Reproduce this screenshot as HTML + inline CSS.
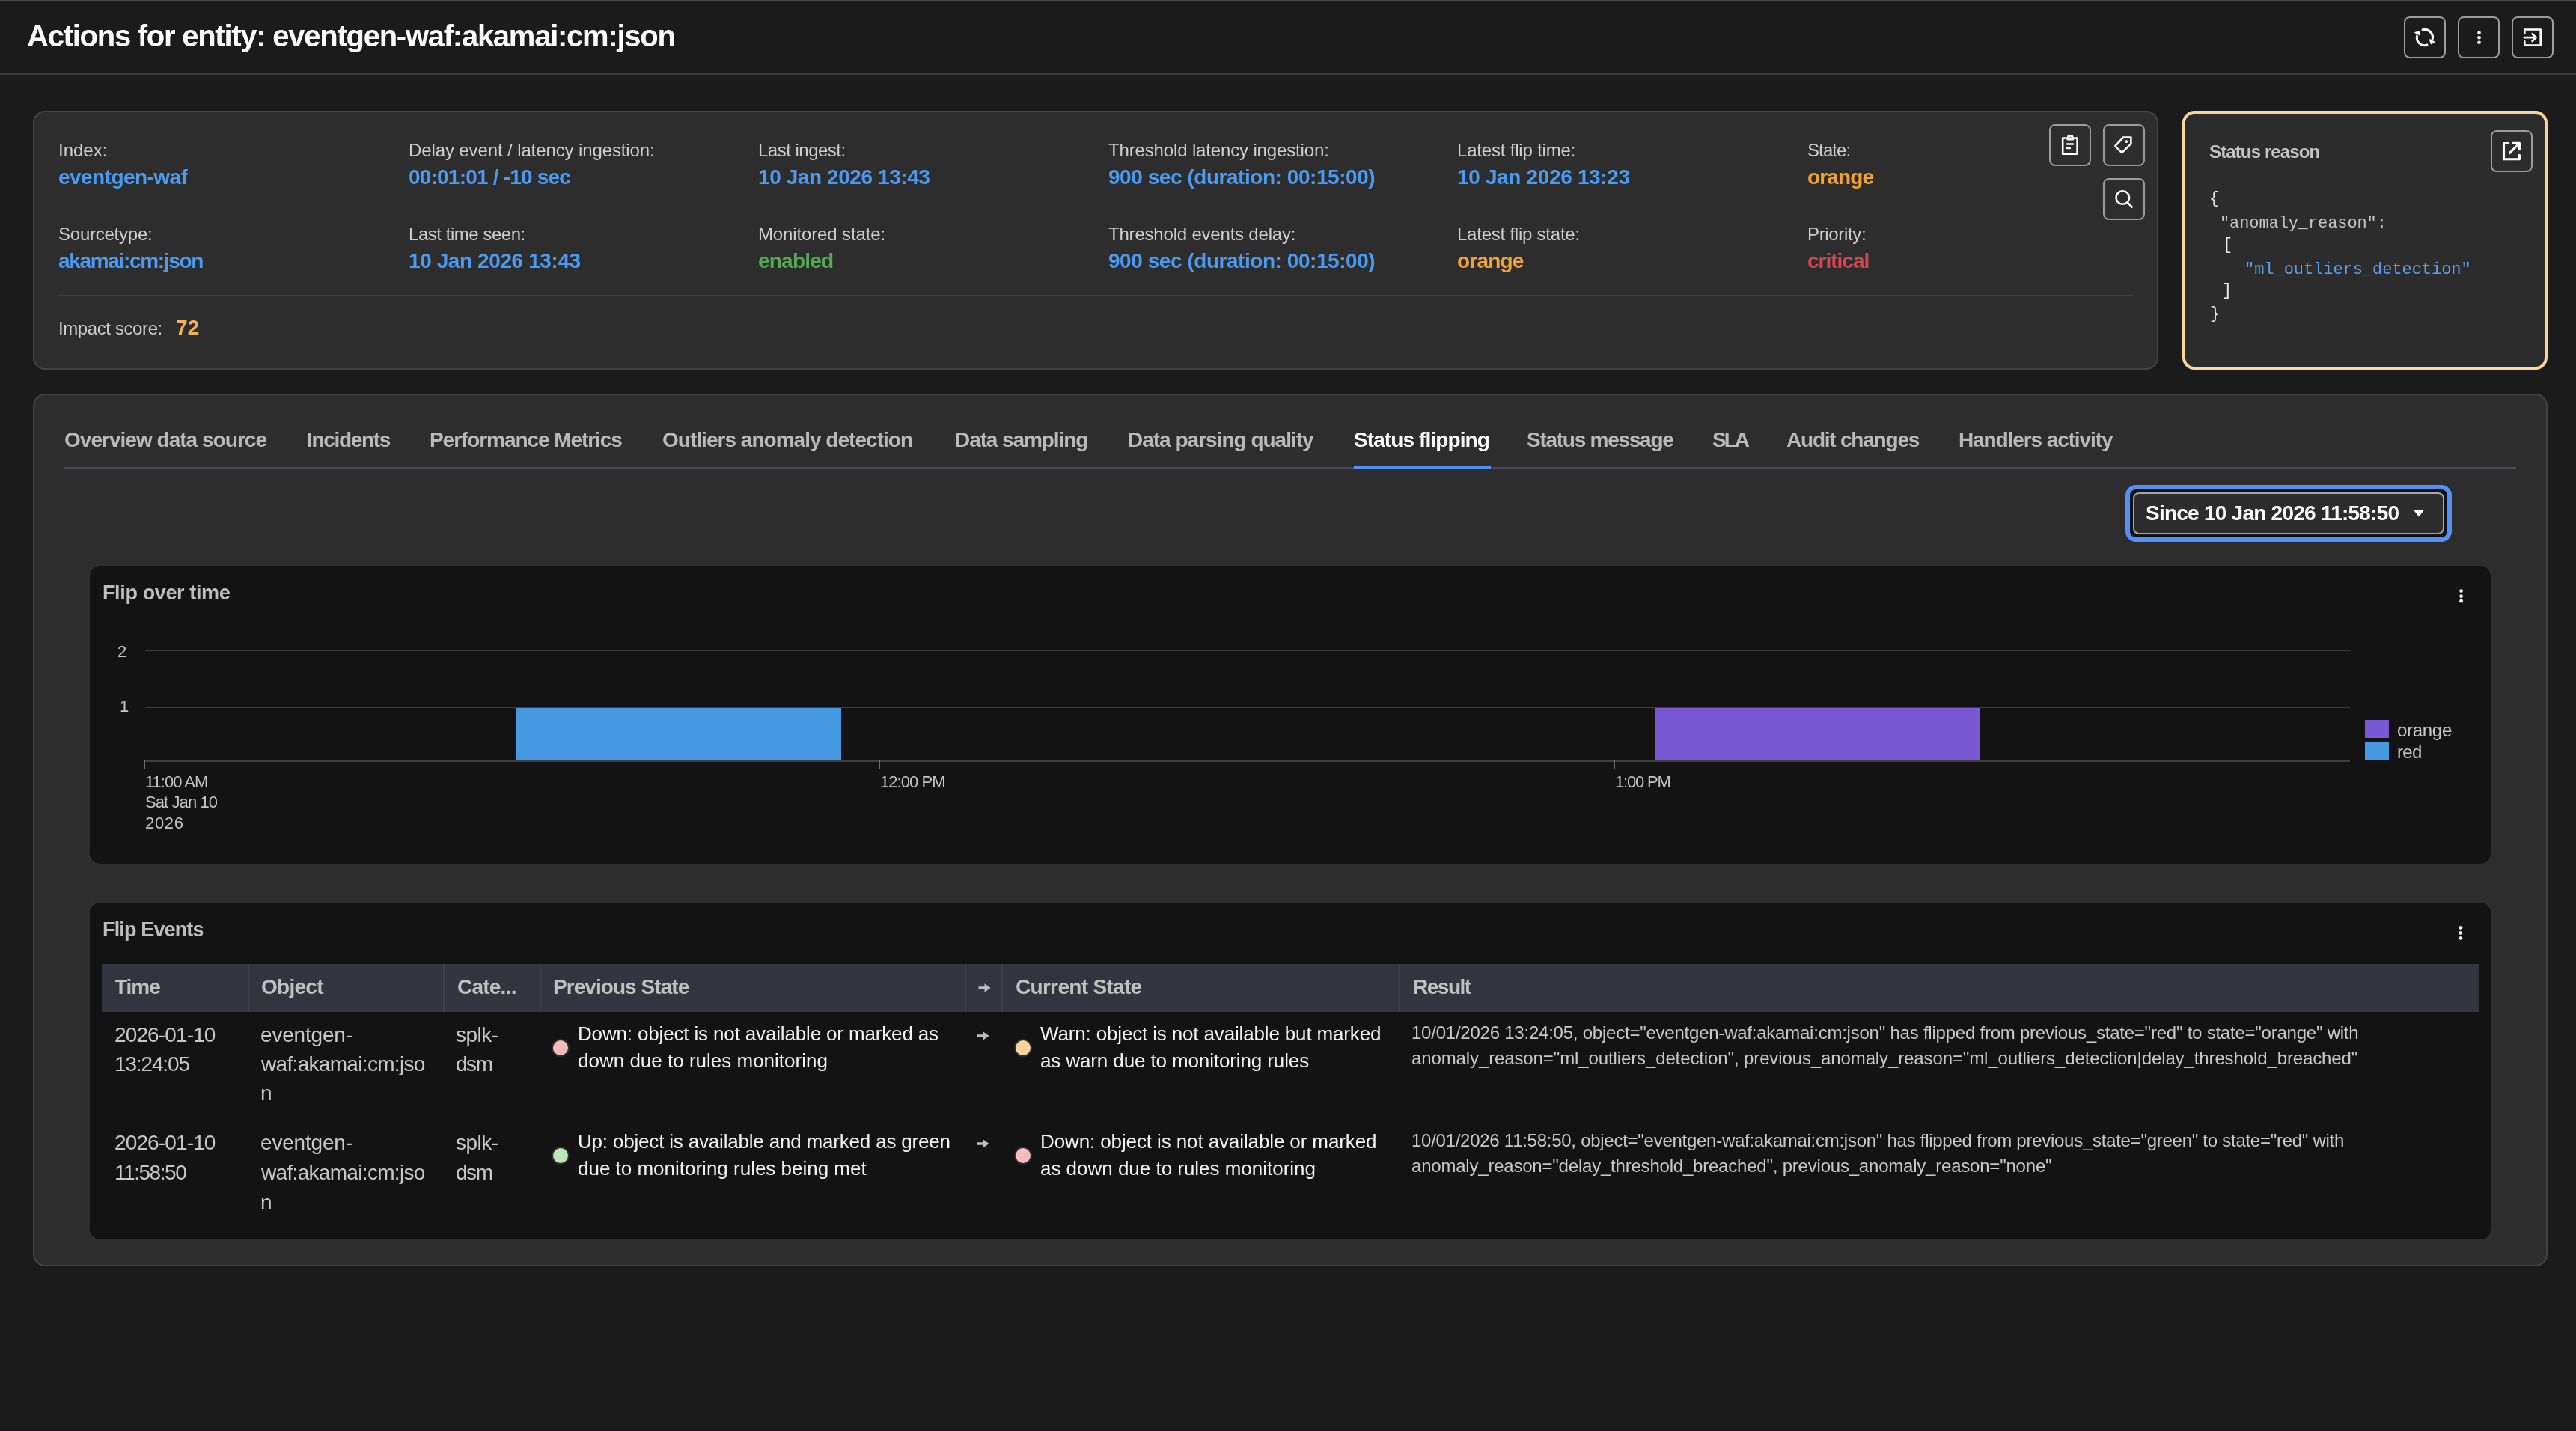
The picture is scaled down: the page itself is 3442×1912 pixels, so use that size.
<!DOCTYPE html>
<html><head><meta charset="utf-8"><title>Actions for entity</title>
<style>
html,body{margin:0;padding:0;width:3442px;height:1912px;overflow:hidden;background:#1b1b1b;}
body{position:relative;font-family:"Liberation Sans",sans-serif;}
.t{position:absolute;white-space:pre;will-change:transform;}
.b{position:absolute;}
</style></head><body>
<div class="b" style="left:0px;top:0px;width:3442px;height:2px;background:#464847"></div>
<div class="t" style="left:35.50px;top:28.20px;font-size:40px;line-height:40px;color:#ffffff;font-weight:700;letter-spacing:-1.254px;font-family:'Liberation Sans',sans-serif">Actions for entity: eventgen-waf:akamai:cm:json</div>
<div class="b" style="left:0px;top:98px;width:3442px;height:2px;background:#3a3a3a"></div>
<div class="b" style="left:3212px;top:22px;width:56px;height:56px;box-sizing:border-box;border:2px solid #9c9c9c;border-radius:8px;background:#1b1b1b"></div>
<div class="b" style="left:3284px;top:22px;width:56px;height:56px;box-sizing:border-box;border:2px solid #9c9c9c;border-radius:8px;background:#1b1b1b"></div>
<div class="b" style="left:3356px;top:22px;width:56px;height:56px;box-sizing:border-box;border:2px solid #9c9c9c;border-radius:8px;background:#1b1b1b"></div>
<svg class="b" style="left:3212px;top:22px" width="56" height="56" viewBox="0 0 56 56">
<path d="M23.9 18.3 A10.5 10.5 0 0 1 37.6 32" style="stroke:#ffffff;fill:none;stroke-width:2.6;stroke-linecap:round;stroke-linejoin:round;stroke-width:3;stroke-linecap:butt"/>
<path d="M32.1 37.7 A10.5 10.5 0 0 1 17.7 25.2" style="stroke:#ffffff;fill:none;stroke-width:2.6;stroke-linecap:round;stroke-linejoin:round;stroke-width:3;stroke-linecap:butt"/>
<path d="M34.4 30.9 L41.1 34.3 L36.3 36.6 Z" style="fill:#fff;stroke:#fff;stroke-width:1.2;stroke-linejoin:round"/>
<path d="M14.8 21.5 L20.9 19.6 L21.4 25 Z" style="fill:#fff;stroke:#fff;stroke-width:1.2;stroke-linejoin:round"/>
</svg>
<svg class="b" style="left:3284px;top:22px" width="56" height="56" viewBox="0 0 56 56">
<circle cx="28.5" cy="21.8" r="2.3" fill="#fff"/><circle cx="28.5" cy="28.3" r="2.3" fill="#fff"/><circle cx="28.5" cy="34.8" r="2.3" fill="#fff"/>
</svg>
<svg class="b" style="left:3356px;top:22px" width="56" height="56" viewBox="0 0 56 56">
<path d="M17.3 22.8 V17.5 H38.7 V38.5 H17.3 V33.4" style="stroke:#ffffff;fill:none;stroke-width:2.6;stroke-linecap:round;stroke-linejoin:round"/>
<path d="M16.8 28.1 H32.6 M27.6 23.2 L32.6 28.1 L27.6 33" style="stroke:#ffffff;fill:none;stroke-width:2.6;stroke-linecap:round;stroke-linejoin:round"/>
</svg>
<div class="b" style="left:44px;top:148px;width:2840px;height:346px;box-sizing:border-box;border:2px solid #434343;border-radius:16px;background:#2d2d2d"></div>
<div class="t" style="left:78.00px;top:188.80px;font-size:24px;line-height:24px;color:#cdcdcd;font-weight:400;letter-spacing:0.000px;font-family:'Liberation Sans',sans-serif">Index:</div>
<div class="t" style="left:78.00px;top:223.00px;font-size:28px;line-height:28px;color:#4a9af0;font-weight:700;letter-spacing:-0.545px;font-family:'Liberation Sans',sans-serif">eventgen-waf</div>
<div class="t" style="left:545.50px;top:188.80px;font-size:24px;line-height:24px;color:#cdcdcd;font-weight:400;letter-spacing:-0.113px;font-family:'Liberation Sans',sans-serif">Delay event / latency ingestion:</div>
<div class="t" style="left:545.50px;top:223.00px;font-size:28px;line-height:28px;color:#4a9af0;font-weight:700;letter-spacing:-0.794px;font-family:'Liberation Sans',sans-serif">00:01:01 / -10 sec</div>
<div class="t" style="left:1013.00px;top:188.80px;font-size:24px;line-height:24px;color:#cdcdcd;font-weight:400;letter-spacing:-0.509px;font-family:'Liberation Sans',sans-serif">Last ingest:</div>
<div class="t" style="left:1013.00px;top:223.00px;font-size:28px;line-height:28px;color:#4a9af0;font-weight:700;letter-spacing:-0.419px;font-family:'Liberation Sans',sans-serif">10 Jan 2026 13:43</div>
<div class="t" style="left:1480.50px;top:188.80px;font-size:24px;line-height:24px;color:#cdcdcd;font-weight:400;letter-spacing:-0.148px;font-family:'Liberation Sans',sans-serif">Threshold latency ingestion:</div>
<div class="t" style="left:1480.50px;top:223.00px;font-size:28px;line-height:28px;color:#4a9af0;font-weight:700;letter-spacing:-0.452px;font-family:'Liberation Sans',sans-serif">900 sec (duration: 00:15:00)</div>
<div class="t" style="left:1947.00px;top:188.80px;font-size:24px;line-height:24px;color:#cdcdcd;font-weight:400;letter-spacing:-0.188px;font-family:'Liberation Sans',sans-serif">Latest flip time:</div>
<div class="t" style="left:1947.00px;top:223.00px;font-size:28px;line-height:28px;color:#4a9af0;font-weight:700;letter-spacing:-0.344px;font-family:'Liberation Sans',sans-serif">10 Jan 2026 13:23</div>
<div class="t" style="left:2415.00px;top:188.80px;font-size:24px;line-height:24px;color:#cdcdcd;font-weight:400;letter-spacing:-0.900px;font-family:'Liberation Sans',sans-serif">State:</div>
<div class="t" style="left:2415.00px;top:223.00px;font-size:28px;line-height:28px;color:#f0a236;font-weight:700;letter-spacing:-0.880px;font-family:'Liberation Sans',sans-serif">orange</div>
<div class="t" style="left:78.00px;top:300.70px;font-size:24px;line-height:24px;color:#cdcdcd;font-weight:400;letter-spacing:-0.240px;font-family:'Liberation Sans',sans-serif">Sourcetype:</div>
<div class="t" style="left:78.00px;top:334.70px;font-size:28px;line-height:28px;color:#4a9af0;font-weight:700;letter-spacing:-1.323px;font-family:'Liberation Sans',sans-serif">akamai:cm:json</div>
<div class="t" style="left:545.50px;top:300.70px;font-size:24px;line-height:24px;color:#cdcdcd;font-weight:400;letter-spacing:-0.464px;font-family:'Liberation Sans',sans-serif">Last time seen:</div>
<div class="t" style="left:545.50px;top:334.70px;font-size:28px;line-height:28px;color:#4a9af0;font-weight:700;letter-spacing:-0.406px;font-family:'Liberation Sans',sans-serif">10 Jan 2026 13:43</div>
<div class="t" style="left:1013.00px;top:300.70px;font-size:24px;line-height:24px;color:#cdcdcd;font-weight:400;letter-spacing:-0.133px;font-family:'Liberation Sans',sans-serif">Monitored state:</div>
<div class="t" style="left:1013.00px;top:334.70px;font-size:28px;line-height:28px;color:#53a953;font-weight:700;letter-spacing:-0.783px;font-family:'Liberation Sans',sans-serif">enabled</div>
<div class="t" style="left:1480.50px;top:300.70px;font-size:24px;line-height:24px;color:#cdcdcd;font-weight:400;letter-spacing:-0.200px;font-family:'Liberation Sans',sans-serif">Threshold events delay:</div>
<div class="t" style="left:1480.50px;top:334.70px;font-size:28px;line-height:28px;color:#4a9af0;font-weight:700;letter-spacing:-0.452px;font-family:'Liberation Sans',sans-serif">900 sec (duration: 00:15:00)</div>
<div class="t" style="left:1947.00px;top:300.70px;font-size:24px;line-height:24px;color:#cdcdcd;font-weight:400;letter-spacing:-0.235px;font-family:'Liberation Sans',sans-serif">Latest flip state:</div>
<div class="t" style="left:1947.00px;top:334.70px;font-size:28px;line-height:28px;color:#f0a236;font-weight:700;letter-spacing:-0.800px;font-family:'Liberation Sans',sans-serif">orange</div>
<div class="t" style="left:2415.00px;top:300.70px;font-size:24px;line-height:24px;color:#cdcdcd;font-weight:400;letter-spacing:-0.338px;font-family:'Liberation Sans',sans-serif">Priority:</div>
<div class="t" style="left:2415.00px;top:334.70px;font-size:28px;line-height:28px;color:#d5444f;font-weight:700;letter-spacing:-1.000px;font-family:'Liberation Sans',sans-serif">critical</div>
<div class="b" style="left:78px;top:394px;width:2772px;height:2px;background:#3e3e3e"></div>
<div class="t" style="left:78.00px;top:426.70px;font-size:24px;line-height:24px;color:#cdcdcd;font-weight:400;letter-spacing:-0.400px;font-family:'Liberation Sans',sans-serif">Impact score:</div>
<div class="t" style="left:234.50px;top:423.70px;font-size:28px;line-height:28px;color:#f3b152;font-weight:700;letter-spacing:0.100px;font-family:'Liberation Sans',sans-serif">72</div>
<div class="b" style="left:2738px;top:166px;width:56px;height:56px;box-sizing:border-box;border:2px solid #9c9c9c;border-radius:8px;background:#2d2d2d"></div>
<div class="b" style="left:2810px;top:166px;width:56px;height:56px;box-sizing:border-box;border:2px solid #9c9c9c;border-radius:8px;background:#2d2d2d"></div>
<div class="b" style="left:2810px;top:238px;width:56px;height:56px;box-sizing:border-box;border:2px solid #9c9c9c;border-radius:8px;background:#2d2d2d"></div>
<svg class="b" style="left:2738px;top:166px" width="56" height="56" viewBox="0 0 56 56">
<path d="M24.5 18.5 H18.2 V39.7 H37.6 V18.5 H32" style="stroke:#ffffff;fill:none;stroke-width:2.6;stroke-linecap:round;stroke-linejoin:round;stroke-width:2.6"/>
<path d="M24.6 20.2 L25.6 16.1 H30.9 L31.9 20.2 Z" style="stroke:#ffffff;fill:none;stroke-width:2.6;stroke-linecap:round;stroke-linejoin:round;stroke-width:2.6"/>
<path d="M24.2 26.5 H31.9 M24.2 32 H27.9" style="stroke:#ffffff;fill:none;stroke-width:2.6;stroke-linecap:round;stroke-linejoin:round;stroke-width:2.6"/>
</svg>
<svg class="b" style="left:2810px;top:166px" width="56" height="56" viewBox="0 0 56 56">
<path d="M16.2 29.2 L27.2 17.5 H37.4 V26.2 L25.3 38.2 Z" style="stroke:#ffffff;fill:none;stroke-width:2.6;stroke-linecap:round;stroke-linejoin:round;stroke-width:2.6"/>
<circle cx="31.3" cy="23.1" r="1.9" fill="#fff"/>
</svg>
<svg class="b" style="left:2810px;top:238px" width="56" height="56" viewBox="0 0 56 56">
<circle cx="26.3" cy="26" r="8.8" style="stroke:#ffffff;fill:none;stroke-width:2.6;stroke-linecap:round;stroke-linejoin:round;stroke-width:2.6"/>
<path d="M32.6 32.4 L38.6 38.5" style="stroke:#ffffff;fill:none;stroke-width:2.6;stroke-linecap:round;stroke-linejoin:round;stroke-width:2.6"/>
</svg>
<div class="b" style="left:2916px;top:148px;width:488px;height:346px;box-sizing:border-box;border:4px solid #f9d59e;border-radius:16px;background:#2c2c2c"></div>
<div class="t" style="left:2952.00px;top:191.20px;font-size:24px;line-height:24px;color:#c4c4c4;font-weight:700;letter-spacing:-0.875px;font-family:'Liberation Sans',sans-serif">Status reason</div>
<div class="b" style="left:3328px;top:174px;width:56px;height:56px;box-sizing:border-box;border:2px solid #9c9c9c;border-radius:8px;background:#2c2c2c"></div>
<svg class="b" style="left:3328px;top:174px" width="56" height="56" viewBox="0 0 56 56">
<path d="M23.4 17.5 H17.5 V38.7 H38.4 V33.2" style="stroke:#ffffff;fill:none;stroke-width:2.6;stroke-linecap:round;stroke-linejoin:round;stroke-width:3.1"/>
<path d="M25.4 30.4 L37.4 18.4 M30 17.4 H38.5 V25.6" style="stroke:#ffffff;fill:none;stroke-width:2.6;stroke-linecap:round;stroke-linejoin:round;stroke-width:3.1"/>
</svg>
<div class="t" style="left:2951.50px;top:255.30px;font-size:22px;line-height:22px;color:#e8e8e8;font-weight:400;letter-spacing:0.000px;font-family:'Liberation Mono',monospace">{</div>
<div class="t" style="left:2966.00px;top:288.00px;font-size:22px;line-height:22px;color:#c4c4c4;font-weight:400;letter-spacing:-0.094px;font-family:'Liberation Mono',monospace">&quot;anomaly_reason&quot;:</div>
<div class="t" style="left:2970.00px;top:317.20px;font-size:22px;line-height:22px;color:#e8e8e8;font-weight:400;letter-spacing:0.000px;font-family:'Liberation Mono',monospace">[</div>
<div class="t" style="left:2999.00px;top:349.50px;font-size:22px;line-height:22px;color:#5aa0ec;font-weight:400;letter-spacing:-0.045px;font-family:'Liberation Mono',monospace">&quot;ml_outliers_detection&quot;</div>
<div class="t" style="left:2968.50px;top:378.00px;font-size:22px;line-height:22px;color:#e8e8e8;font-weight:400;letter-spacing:0.000px;font-family:'Liberation Mono',monospace">]</div>
<div class="t" style="left:2953.00px;top:408.50px;font-size:22px;line-height:22px;color:#e8e8e8;font-weight:400;letter-spacing:0.000px;font-family:'Liberation Mono',monospace">}</div>
<div class="b" style="left:44px;top:526px;width:3360px;height:1166px;box-sizing:border-box;border:2px solid #434343;border-radius:16px;background:#2d2d2d"></div>
<div class="t" style="left:86.30px;top:573.80px;font-size:28px;line-height:28px;color:#b9b9b9;font-weight:700;letter-spacing:-0.974px;font-family:'Liberation Sans',sans-serif">Overview data source</div>
<div class="t" style="left:410.40px;top:573.80px;font-size:28px;line-height:28px;color:#b9b9b9;font-weight:700;letter-spacing:-1.312px;font-family:'Liberation Sans',sans-serif">Incidents</div>
<div class="t" style="left:573.90px;top:573.80px;font-size:28px;line-height:28px;color:#b9b9b9;font-weight:700;letter-spacing:-1.061px;font-family:'Liberation Sans',sans-serif">Performance Metrics</div>
<div class="t" style="left:885.40px;top:573.80px;font-size:28px;line-height:28px;color:#b9b9b9;font-weight:700;letter-spacing:-0.976px;font-family:'Liberation Sans',sans-serif">Outliers anomaly detection</div>
<div class="t" style="left:1276.00px;top:573.80px;font-size:28px;line-height:28px;color:#b9b9b9;font-weight:700;letter-spacing:-1.083px;font-family:'Liberation Sans',sans-serif">Data sampling</div>
<div class="t" style="left:1507.00px;top:573.80px;font-size:28px;line-height:28px;color:#b9b9b9;font-weight:700;letter-spacing:-1.000px;font-family:'Liberation Sans',sans-serif">Data parsing quality</div>
<div class="t" style="left:1809.00px;top:573.80px;font-size:28px;line-height:28px;color:#ffffff;font-weight:700;letter-spacing:-0.900px;font-family:'Liberation Sans',sans-serif">Status flipping</div>
<div class="t" style="left:2040.20px;top:573.80px;font-size:28px;line-height:28px;color:#b9b9b9;font-weight:700;letter-spacing:-1.262px;font-family:'Liberation Sans',sans-serif">Status message</div>
<div class="t" style="left:2288.00px;top:573.80px;font-size:28px;line-height:28px;color:#b9b9b9;font-weight:700;letter-spacing:-3.000px;font-family:'Liberation Sans',sans-serif">SLA</div>
<div class="t" style="left:2386.80px;top:573.80px;font-size:28px;line-height:28px;color:#b9b9b9;font-weight:700;letter-spacing:-1.217px;font-family:'Liberation Sans',sans-serif">Audit changes</div>
<div class="t" style="left:2617.40px;top:573.80px;font-size:28px;line-height:28px;color:#b9b9b9;font-weight:700;letter-spacing:-1.100px;font-family:'Liberation Sans',sans-serif">Handlers activity</div>
<div class="b" style="left:86px;top:624px;width:3276px;height:2px;background:#4b4c55"></div>
<div class="b" style="left:1809px;top:622px;width:183px;height:4px;background:#5294f2"></div>
<div class="b" style="left:2840px;top:648px;width:436px;height:76px;box-sizing:border-box;border:6px solid #5591f2;border-radius:14px;background:#111215"></div>
<div class="b" style="left:2850px;top:658px;width:416px;height:56px;box-sizing:border-box;border:2px solid #a6a6a6;border-radius:8px;background:#2c2c2c"></div>
<div class="t" style="left:2867.30px;top:671.50px;font-size:28px;line-height:28px;color:#ffffff;font-weight:700;letter-spacing:-0.756px;font-family:'Liberation Sans',sans-serif">Since 10 Jan 2026 11:58:50</div>
<svg class="b" style="left:3222px;top:678px" width="20" height="16" viewBox="0 0 20 16"><path d="M3 3.5 H17 L10 12.5 Z" fill="#fff"/></svg>
<div class="b" style="left:120px;top:756px;width:3208px;height:398px;border-radius:14px;background:#131313"></div>
<div class="t" style="left:137.00px;top:779.00px;font-size:27px;line-height:27px;color:#bdbdbd;font-weight:700;letter-spacing:-0.369px;font-family:'Liberation Sans',sans-serif">Flip over time</div>
<svg class="b" style="left:3280px;top:782px" width="18" height="30" viewBox="0 0 18 30"><circle cx="8.6" cy="7.6" r="2.4" fill="#fff"/><circle cx="8.6" cy="14.7" r="2.4" fill="#fff"/><circle cx="8.6" cy="21.2" r="2.4" fill="#fff"/></svg>
<div class="b" style="left:194px;top:868px;width:2946px;height:2px;background:#3a3a3a"></div>
<div class="b" style="left:194px;top:944px;width:2946px;height:2px;background:#3a3a3a"></div>
<div class="b" style="left:192px;top:1016px;width:2948px;height:2px;background:#3e3e3e"></div>
<div class="t" style="left:157.40px;top:859.80px;font-size:22px;line-height:22px;color:#c4c4c4;font-weight:400;letter-spacing:0.000px;font-family:'Liberation Sans',sans-serif">2</div>
<div class="t" style="left:160.00px;top:933.40px;font-size:22px;line-height:22px;color:#c4c4c4;font-weight:400;letter-spacing:0.000px;font-family:'Liberation Sans',sans-serif">1</div>
<div class="b" style="left:192px;top:1016px;width:2px;height:12px;background:#6a6a6a"></div>
<div class="b" style="left:1174px;top:1016px;width:2px;height:12px;background:#6a6a6a"></div>
<div class="b" style="left:2156px;top:1016px;width:2px;height:12px;background:#6a6a6a"></div>
<div class="b" style="left:690px;top:946px;width:434px;height:70px;background:#4599e0"></div>
<div class="b" style="left:2212px;top:946px;width:434px;height:70px;background:#7958d4"></div>
<div class="t" style="left:194.20px;top:1033.50px;font-size:22px;line-height:22px;color:#c4c4c4;font-weight:400;letter-spacing:-1.014px;font-family:'Liberation Sans',sans-serif">11:00 AM</div>
<div class="t" style="left:194.20px;top:1060.90px;font-size:22px;line-height:22px;color:#c4c4c4;font-weight:400;letter-spacing:-0.911px;font-family:'Liberation Sans',sans-serif">Sat Jan 10</div>
<div class="t" style="left:194.20px;top:1089.00px;font-size:22px;line-height:22px;color:#c4c4c4;font-weight:400;letter-spacing:0.700px;font-family:'Liberation Sans',sans-serif">2026</div>
<div class="t" style="left:1176.30px;top:1033.50px;font-size:22px;line-height:22px;color:#c4c4c4;font-weight:400;letter-spacing:-0.957px;font-family:'Liberation Sans',sans-serif">12:00 PM</div>
<div class="t" style="left:2158.00px;top:1033.50px;font-size:22px;line-height:22px;color:#c4c4c4;font-weight:400;letter-spacing:-1.167px;font-family:'Liberation Sans',sans-serif">1:00 PM</div>
<div class="b" style="left:3160px;top:962px;width:32px;height:24px;background:#7958d4"></div>
<div class="b" style="left:3160px;top:992px;width:32px;height:24px;background:#4599e0"></div>
<div class="t" style="left:3202.70px;top:963.90px;font-size:24px;line-height:24px;color:#c8c8c8;font-weight:400;letter-spacing:-0.300px;font-family:'Liberation Sans',sans-serif">orange</div>
<div class="t" style="left:3202.70px;top:992.90px;font-size:24px;line-height:24px;color:#c8c8c8;font-weight:400;letter-spacing:-0.700px;font-family:'Liberation Sans',sans-serif">red</div>
<div class="b" style="left:120px;top:1206px;width:3208px;height:450px;border-radius:14px;background:#131313"></div>
<div class="t" style="left:137.00px;top:1228.50px;font-size:27px;line-height:27px;color:#bdbdbd;font-weight:700;letter-spacing:-0.850px;font-family:'Liberation Sans',sans-serif">Flip Events</div>
<svg class="b" style="left:3280px;top:1232px" width="18" height="30" viewBox="0 0 18 30"><circle cx="8" cy="7.5" r="2.4" fill="#fff"/><circle cx="8" cy="14.5" r="2.4" fill="#fff"/><circle cx="8" cy="21.5" r="2.4" fill="#fff"/></svg>
<div class="b" style="left:136px;top:1288px;width:3176px;height:64px;background:#33343d"></div>
<div class="b" style="left:331px;top:1288px;width:2px;height:64px;background:#3f4049"></div>
<div class="b" style="left:592px;top:1288px;width:2px;height:64px;background:#3f4049"></div>
<div class="b" style="left:721px;top:1288px;width:2px;height:64px;background:#3f4049"></div>
<div class="b" style="left:1289px;top:1288px;width:2px;height:64px;background:#3f4049"></div>
<div class="b" style="left:1338px;top:1288px;width:2px;height:64px;background:#3f4049"></div>
<div class="b" style="left:1869px;top:1288px;width:2px;height:64px;background:#3f4049"></div>
<div class="t" style="left:152.50px;top:1304.80px;font-size:28px;line-height:28px;color:#c0c0c0;font-weight:700;letter-spacing:-1.033px;font-family:'Liberation Sans',sans-serif">Time</div>
<div class="t" style="left:349.40px;top:1304.80px;font-size:28px;line-height:28px;color:#c0c0c0;font-weight:700;letter-spacing:-0.720px;font-family:'Liberation Sans',sans-serif">Object</div>
<div class="t" style="left:610.60px;top:1304.80px;font-size:28px;line-height:28px;color:#c0c0c0;font-weight:700;letter-spacing:-0.767px;font-family:'Liberation Sans',sans-serif">Cate...</div>
<div class="t" style="left:739.30px;top:1304.80px;font-size:28px;line-height:28px;color:#c0c0c0;font-weight:700;letter-spacing:-0.946px;font-family:'Liberation Sans',sans-serif">Previous State</div>
<div class="t" style="left:1357.10px;top:1304.80px;font-size:28px;line-height:28px;color:#c0c0c0;font-weight:700;letter-spacing:-0.683px;font-family:'Liberation Sans',sans-serif">Current State</div>
<div class="t" style="left:1888.40px;top:1304.80px;font-size:28px;line-height:28px;color:#c0c0c0;font-weight:700;letter-spacing:-1.480px;font-family:'Liberation Sans',sans-serif">Result</div>
<svg class="b" style="left:1305.5px;top:1312.8px" width="20" height="14" viewBox="0 0 20 14"><path d="M1.5 5.2 H9.5 V1.2 L17.5 7 L9.5 12.8 V8.8 H1.5 Z" fill="#bdbdbd"/></svg>
<svg class="b" style="left:1304px;top:1377px" width="20" height="14" viewBox="0 0 20 14"><path d="M1.5 5.2 H9.5 V1.2 L17.5 7 L9.5 12.8 V8.8 H1.5 Z" fill="#bdbdbd"/></svg>
<svg class="b" style="left:1304px;top:1521px" width="20" height="14" viewBox="0 0 20 14"><path d="M1.5 5.2 H9.5 V1.2 L17.5 7 L9.5 12.8 V8.8 H1.5 Z" fill="#bdbdbd"/></svg>
<div class="t" style="left:152.50px;top:1368.50px;font-size:28px;line-height:28px;color:#c8c8c8;font-weight:400;letter-spacing:-0.867px;font-family:'Liberation Sans',sans-serif">2026-01-10</div>
<div class="t" style="left:153.20px;top:1408.10px;font-size:28px;line-height:28px;color:#c8c8c8;font-weight:400;letter-spacing:-1.143px;font-family:'Liberation Sans',sans-serif">13:24:05</div>
<div class="t" style="left:347.70px;top:1368.50px;font-size:28px;line-height:28px;color:#c8c8c8;font-weight:400;letter-spacing:-0.188px;font-family:'Liberation Sans',sans-serif">eventgen-</div>
<div class="t" style="left:348.70px;top:1408.10px;font-size:28px;line-height:28px;color:#c8c8c8;font-weight:400;letter-spacing:-0.681px;font-family:'Liberation Sans',sans-serif">waf:akamai:cm:jso</div>
<div class="t" style="left:347.70px;top:1447.30px;font-size:28px;line-height:28px;color:#c8c8c8;font-weight:400;letter-spacing:0.000px;font-family:'Liberation Sans',sans-serif">n</div>
<div class="t" style="left:608.60px;top:1368.50px;font-size:28px;line-height:28px;color:#c8c8c8;font-weight:400;letter-spacing:-0.500px;font-family:'Liberation Sans',sans-serif">splk-</div>
<div class="t" style="left:608.60px;top:1408.10px;font-size:28px;line-height:28px;color:#c8c8c8;font-weight:400;letter-spacing:-1.450px;font-family:'Liberation Sans',sans-serif">dsm</div>
<div class="b" style="left:737px;top:1388px;width:24px;height:24px;box-sizing:border-box;border:2px solid #2c2c2c;border-radius:50%;background:#f5bcbc"></div>
<div class="t" style="left:772.20px;top:1368.10px;font-size:26px;line-height:26px;color:#f2f2f2;font-weight:400;letter-spacing:-0.156px;font-family:'Liberation Sans',sans-serif">Down: object is not available or marked as</div>
<div class="t" style="left:772.20px;top:1403.70px;font-size:26px;line-height:26px;color:#f2f2f2;font-weight:400;letter-spacing:0.000px;font-family:'Liberation Sans',sans-serif">down due to rules monitoring</div>
<div class="b" style="left:1355px;top:1388px;width:24px;height:24px;box-sizing:border-box;border:2px solid #2c2c2c;border-radius:50%;background:#f8d49b"></div>
<div class="t" style="left:1389.60px;top:1367.80px;font-size:26px;line-height:26px;color:#f2f2f2;font-weight:400;letter-spacing:-0.154px;font-family:'Liberation Sans',sans-serif">Warn: object is not available but marked</div>
<div class="t" style="left:1389.60px;top:1403.50px;font-size:26px;line-height:26px;color:#f2f2f2;font-weight:400;letter-spacing:-0.120px;font-family:'Liberation Sans',sans-serif">as warn due to monitoring rules</div>
<div class="t" style="left:1886.10px;top:1368.00px;font-size:24px;line-height:24px;color:#c8c8c8;font-weight:400;letter-spacing:-0.230px;font-family:'Liberation Sans',sans-serif">10/01/2026 13:24:05, object=&quot;eventgen-waf:akamai:cm:json&quot; has flipped from previous_state=&quot;red&quot; to state=&quot;orange&quot; with</div>
<div class="t" style="left:1886.10px;top:1401.70px;font-size:24px;line-height:24px;color:#c8c8c8;font-weight:400;letter-spacing:-0.115px;font-family:'Liberation Sans',sans-serif">anomaly_reason=&quot;ml_outliers_detection&quot;, previous_anomaly_reason=&quot;ml_outliers_detection|delay_threshold_breached&quot;</div>
<div class="t" style="left:152.50px;top:1512.80px;font-size:28px;line-height:28px;color:#c8c8c8;font-weight:400;letter-spacing:-0.867px;font-family:'Liberation Sans',sans-serif">2026-01-10</div>
<div class="t" style="left:153.20px;top:1552.50px;font-size:28px;line-height:28px;color:#c8c8c8;font-weight:400;letter-spacing:-1.457px;font-family:'Liberation Sans',sans-serif">11:58:50</div>
<div class="t" style="left:347.70px;top:1512.80px;font-size:28px;line-height:28px;color:#c8c8c8;font-weight:400;letter-spacing:-0.188px;font-family:'Liberation Sans',sans-serif">eventgen-</div>
<div class="t" style="left:348.70px;top:1552.50px;font-size:28px;line-height:28px;color:#c8c8c8;font-weight:400;letter-spacing:-0.681px;font-family:'Liberation Sans',sans-serif">waf:akamai:cm:jso</div>
<div class="t" style="left:347.70px;top:1592.50px;font-size:28px;line-height:28px;color:#c8c8c8;font-weight:400;letter-spacing:0.000px;font-family:'Liberation Sans',sans-serif">n</div>
<div class="t" style="left:608.60px;top:1512.80px;font-size:28px;line-height:28px;color:#c8c8c8;font-weight:400;letter-spacing:-0.500px;font-family:'Liberation Sans',sans-serif">splk-</div>
<div class="t" style="left:608.60px;top:1552.50px;font-size:28px;line-height:28px;color:#c8c8c8;font-weight:400;letter-spacing:-1.450px;font-family:'Liberation Sans',sans-serif">dsm</div>
<div class="b" style="left:737px;top:1532px;width:24px;height:24px;box-sizing:border-box;border:2px solid #2c2c2c;border-radius:50%;background:#bde8b5"></div>
<div class="t" style="left:772.20px;top:1512.10px;font-size:26px;line-height:26px;color:#f2f2f2;font-weight:400;letter-spacing:-0.186px;font-family:'Liberation Sans',sans-serif">Up: object is available and marked as green</div>
<div class="t" style="left:772.20px;top:1547.80px;font-size:26px;line-height:26px;color:#f2f2f2;font-weight:400;letter-spacing:-0.006px;font-family:'Liberation Sans',sans-serif">due to monitoring rules being met</div>
<div class="b" style="left:1355px;top:1532px;width:24px;height:24px;box-sizing:border-box;border:2px solid #2c2c2c;border-radius:50%;background:#f5bcbc"></div>
<div class="t" style="left:1389.60px;top:1512.00px;font-size:26px;line-height:26px;color:#f2f2f2;font-weight:400;letter-spacing:-0.113px;font-family:'Liberation Sans',sans-serif">Down: object is not available or marked</div>
<div class="t" style="left:1389.60px;top:1547.70px;font-size:26px;line-height:26px;color:#f2f2f2;font-weight:400;letter-spacing:-0.020px;font-family:'Liberation Sans',sans-serif">as down due to rules monitoring</div>
<div class="t" style="left:1886.10px;top:1512.00px;font-size:24px;line-height:24px;color:#c8c8c8;font-weight:400;letter-spacing:-0.268px;font-family:'Liberation Sans',sans-serif">10/01/2026 11:58:50, object=&quot;eventgen-waf:akamai:cm:json&quot; has flipped from previous_state=&quot;green&quot; to state=&quot;red&quot; with</div>
<div class="t" style="left:1886.10px;top:1545.70px;font-size:24px;line-height:24px;color:#c8c8c8;font-weight:400;letter-spacing:-0.210px;font-family:'Liberation Sans',sans-serif">anomaly_reason=&quot;delay_threshold_breached&quot;, previous_anomaly_reason=&quot;none&quot;</div>
</body></html>
